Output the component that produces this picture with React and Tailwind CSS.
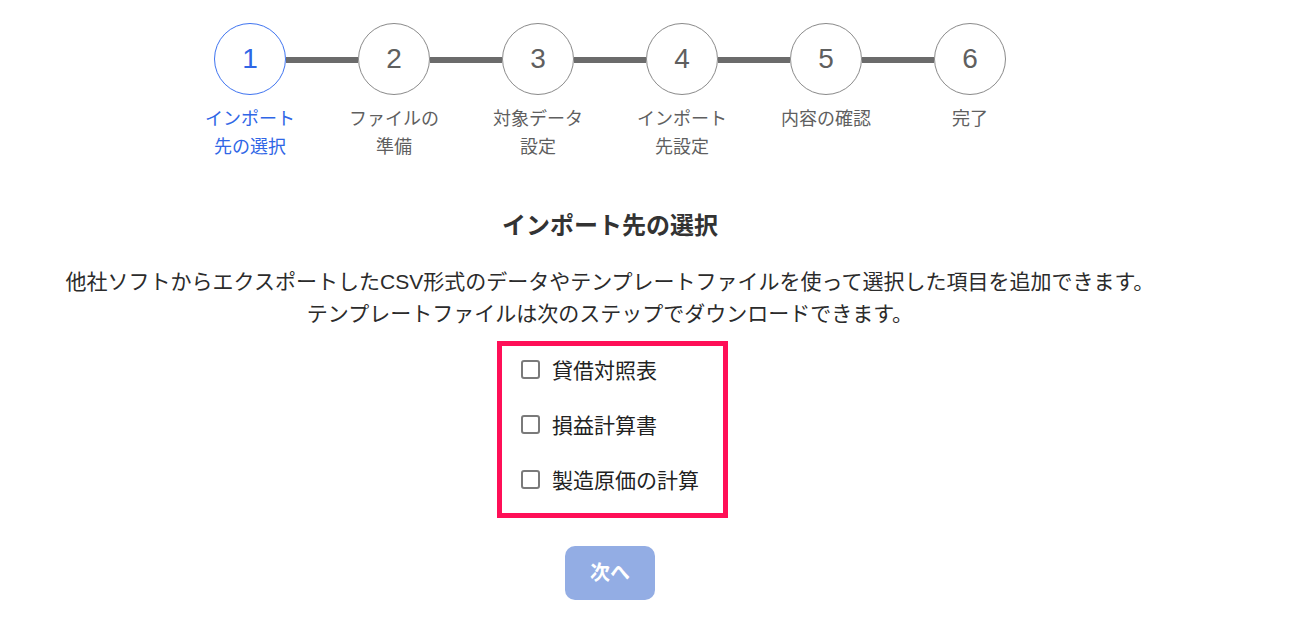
const STEPS = [
  { no: 1, label: 'インポート先の選択' },
  { no: 2, label: 'ファイルの準備' },
  { no: 3, label: '対象データ設定' },
  { no: 4, label: 'インポート先設定' },
  { no: 5, label: '内容の確認' },
  { no: 6, label: '完了' },
]

const TARGETS = ['貸借対照表', '損益計算書', '製造原価の計算']

const FONT = { fontFamily: '"Liberation Sans", "Noto Sans CJK JP", sans-serif' }

function Stepper({ current }) {
  return (
    <div className="flex flex-col items-center">
      {/* circles joined by bars */}
      <div className="flex items-center">
        {STEPS.map((step, i) => (
          <div key={step.no} className="flex items-center">
            {i > 0 && <div className="w-[72px] h-[6px] mt-[2px] bg-[#6b6b6b]" />}
            <div
              className={
                step.no === current
                  ? 'w-[72px] h-[72px] rounded-full border border-[#3f74f0] flex items-center justify-center text-[28px] text-[#2f66e6]'
                  : 'w-[72px] h-[72px] rounded-full border border-[#8a8a8a] flex items-center justify-center text-[28px] text-[#5f5f5f]'
              }
            >
              {step.no}
            </div>
          </div>
        ))}
      </div>

      <div className="flex mt-[10px]">
        {STEPS.map((step) => (
          <div key={step.no} className="w-[144px] flex justify-center">
            <p
              className={
                step.no === current
                  ? 'max-w-[100px] text-center text-[18px] leading-[28px] text-[#2f66e6]'
                  : 'max-w-[100px] text-center text-[18px] leading-[28px] text-[#5f5f5f]'
              }
            >
              {step.label}
            </p>
          </div>
        ))}
      </div>
    </div>
  )
}

export default function App() {
  return (
    <div className="bg-white min-h-screen pr-[76px] pt-[23px]" style={FONT}>
      <Stepper current={1} />

      <div className="flex flex-col items-center">
        <h1 className="mt-[49px] text-[24px] leading-[32px] font-bold text-[#333333]">
          インポート先の選択
        </h1>

        <p className="mt-[24px] text-center text-[21px] leading-[32px] text-[#2b2b2b]">
          他社ソフトからエクスポートしたCSV形式のデータやテンプレートファイルを使って選択した項目を追加できます。
          <br />
          テンプレートファイルは次のステップでダウンロードできます。
        </p>

        <div className="mt-[11px] ml-[5px] border-[5px] border-[#ff0f57] pl-[19px] pr-[24px] pt-[8px] pb-[15px] flex flex-col gap-[21px]">
          {TARGETS.map((name) => (
            <label key={name} className="h-[34px] flex items-center gap-[12px] cursor-pointer">
              <input
                type="checkbox"
                className="appearance-none w-[19px] h-[19px] rounded-[3px] border-2 border-[#7a7a7a] bg-white mt-[-4px]"
              />
              <span className="text-[21px] leading-[34px] text-[#222222]">{name}</span>
            </label>
          ))}
        </div>

        <button
          disabled
          className="mt-[28px] w-[90px] h-[54px] rounded-[10px] bg-[#93ade4] text-white text-[20px] font-bold"
        >
          次へ
        </button>
      </div>
    </div>
  )
}
